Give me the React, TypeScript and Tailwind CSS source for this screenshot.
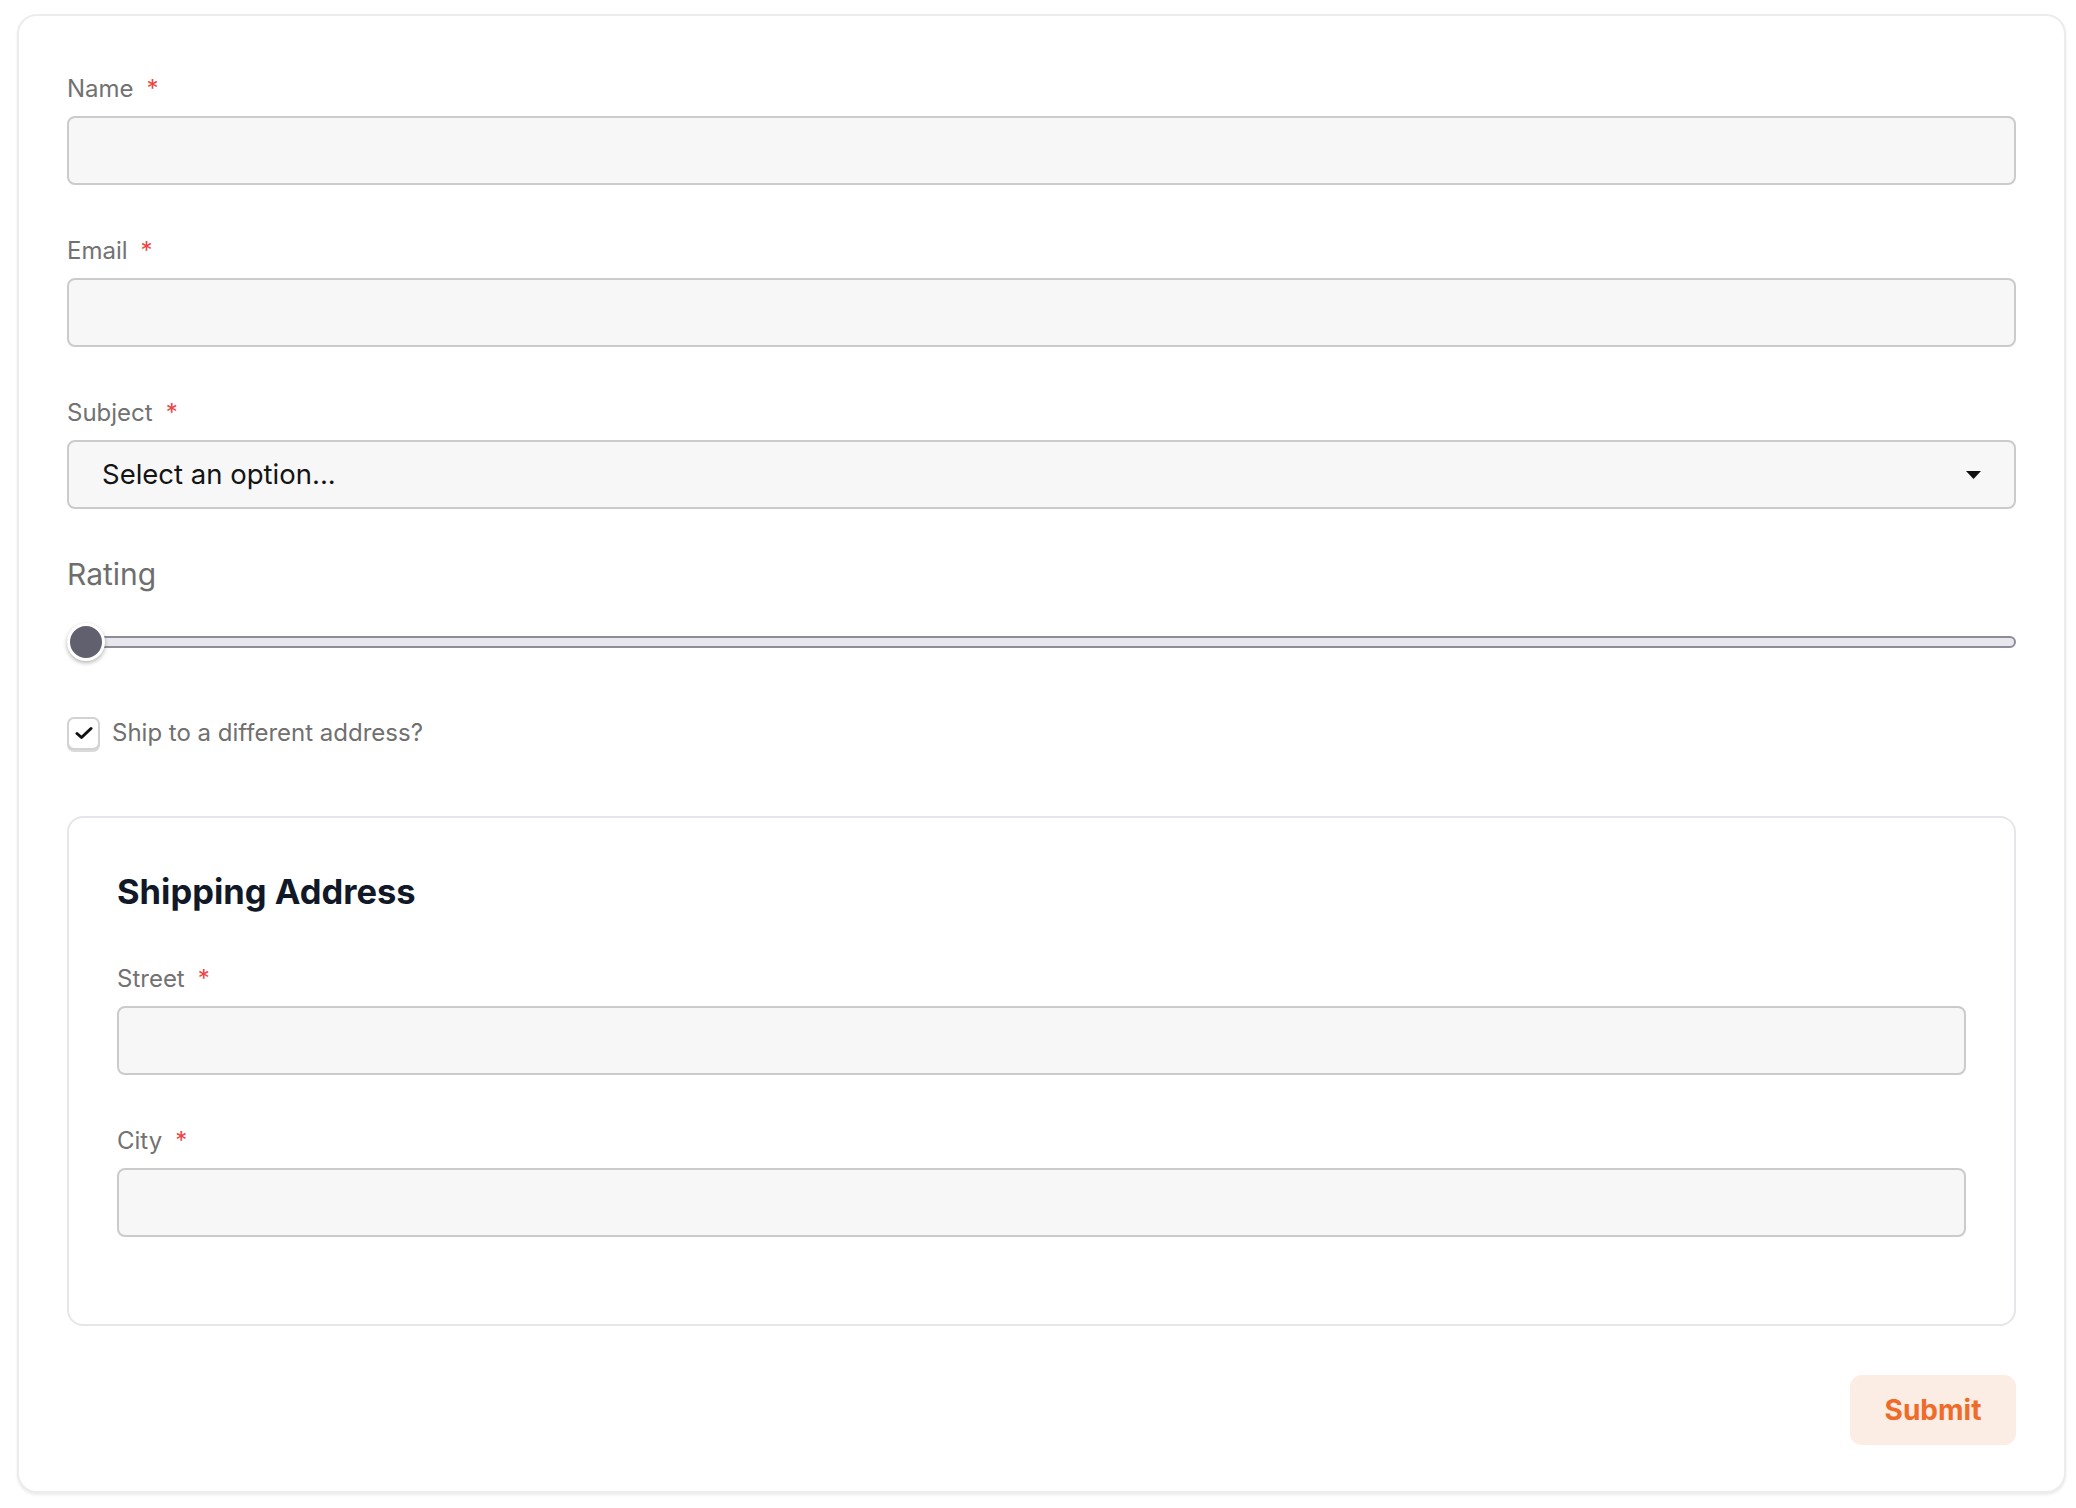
import React from "react";

function Label({ text, required = true }: { text: string; required?: boolean }) {
  return (
    <label className="flex h-8 items-center text-[24px] leading-8 text-[#727272]">
      <span>{text}</span>
      {required && <span className="ml-[13px] text-[#ef4444]">*</span>}
    </label>
  );
}

function TextField({ label, className = "" }: { label: string; className?: string }) {
  return (
    <div className={className}>
      <Label text={label} />
      <input
        type="text"
        className="mt-[11px] block h-[69px] w-full rounded-[8px] border-2 border-[#cbcbcb] bg-[#f7f7f7] px-[31px] text-[26px] text-[#111] outline-none"
      />
    </div>
  );
}

export default function App() {
  return (
    <div className="min-h-screen bg-white pt-[14px] pl-[17px] pr-[10px] pb-[15px] font-[Inter,sans-serif]">
      <div className="rounded-[20px] border-2 border-[#ececec] bg-white px-[48px] pt-[57px] pb-[46px] shadow-[0_2px_3px_rgba(0,0,0,0.08)]">
        <TextField label="Name" />
        <TextField label="Email" className="mt-[50px]" />

        <div className="mt-[50px]">
          <Label text="Subject" />
          <div className="mt-[11px] flex h-[69px] w-full items-center justify-between rounded-[8px] border-2 border-[#cbcbcb] bg-[#f7f7f7] pl-[33px] pr-[33px]">
            <span className="text-[27.5px] text-[#141414]">Select an option...</span>
            <svg width="15" height="8" viewBox="0 0 15 8">
              <path d="M0 0 H15 L7.5 8 Z" fill="#111" />
            </svg>
          </div>
        </div>

        <div className="mt-[45px] text-[30px] leading-[40px] text-[#6e6e6e]">Rating</div>

        {/* slider: track with the thumb resting at the minimum */}
        <div className="relative mt-[29px] flex h-[38px] items-center">
          <div className="h-[12px] w-full rounded-full border-2 border-[#8d8d99] bg-[#e7e7ed]" />
          <div className="absolute left-0 top-0 h-[38px] w-[38px] rounded-full border-[3px] border-white bg-[#60606f] shadow-[0_2px_4px_rgba(0,0,0,0.3)]" />
        </div>

        <div className="mt-[54px] flex h-[36px] items-center">
          <div className="flex h-[33px] w-[33px] items-center justify-center rounded-[7px] border-2 border-[#d2d2d2] bg-white shadow-[0_2px_0_#dadada]">
            <svg width="18" height="14" viewBox="0 0 18 14">
              <path d="M2 7.5 L6.5 11.5 L16 2.5" fill="none" stroke="#111" strokeWidth="3" strokeLinecap="round" strokeLinejoin="round" />
            </svg>
          </div>
          <span className="ml-[12px] text-[24px] text-[#707070]">Ship to a different address?</span>
        </div>

        <div className="mt-[65px] rounded-[16px] border-2 border-[#e6e6ea] px-[48px] pt-[54px] pb-[87px]">
          <h2 className="text-[34.5px] leading-[40px] font-bold text-[#111827]">Shipping Address</h2>
          <TextField label="Street" className="mt-[51px]" />
          <TextField label="City" className="mt-[50px]" />
        </div>

        <div className="mt-[49px] flex justify-end">
          <button className="h-[70px] w-[166px] rounded-[12px] bg-[#fbece4] text-[28px] font-bold text-[#ee6b2a]">
            Submit
          </button>
        </div>
      </div>
    </div>
  );
}
